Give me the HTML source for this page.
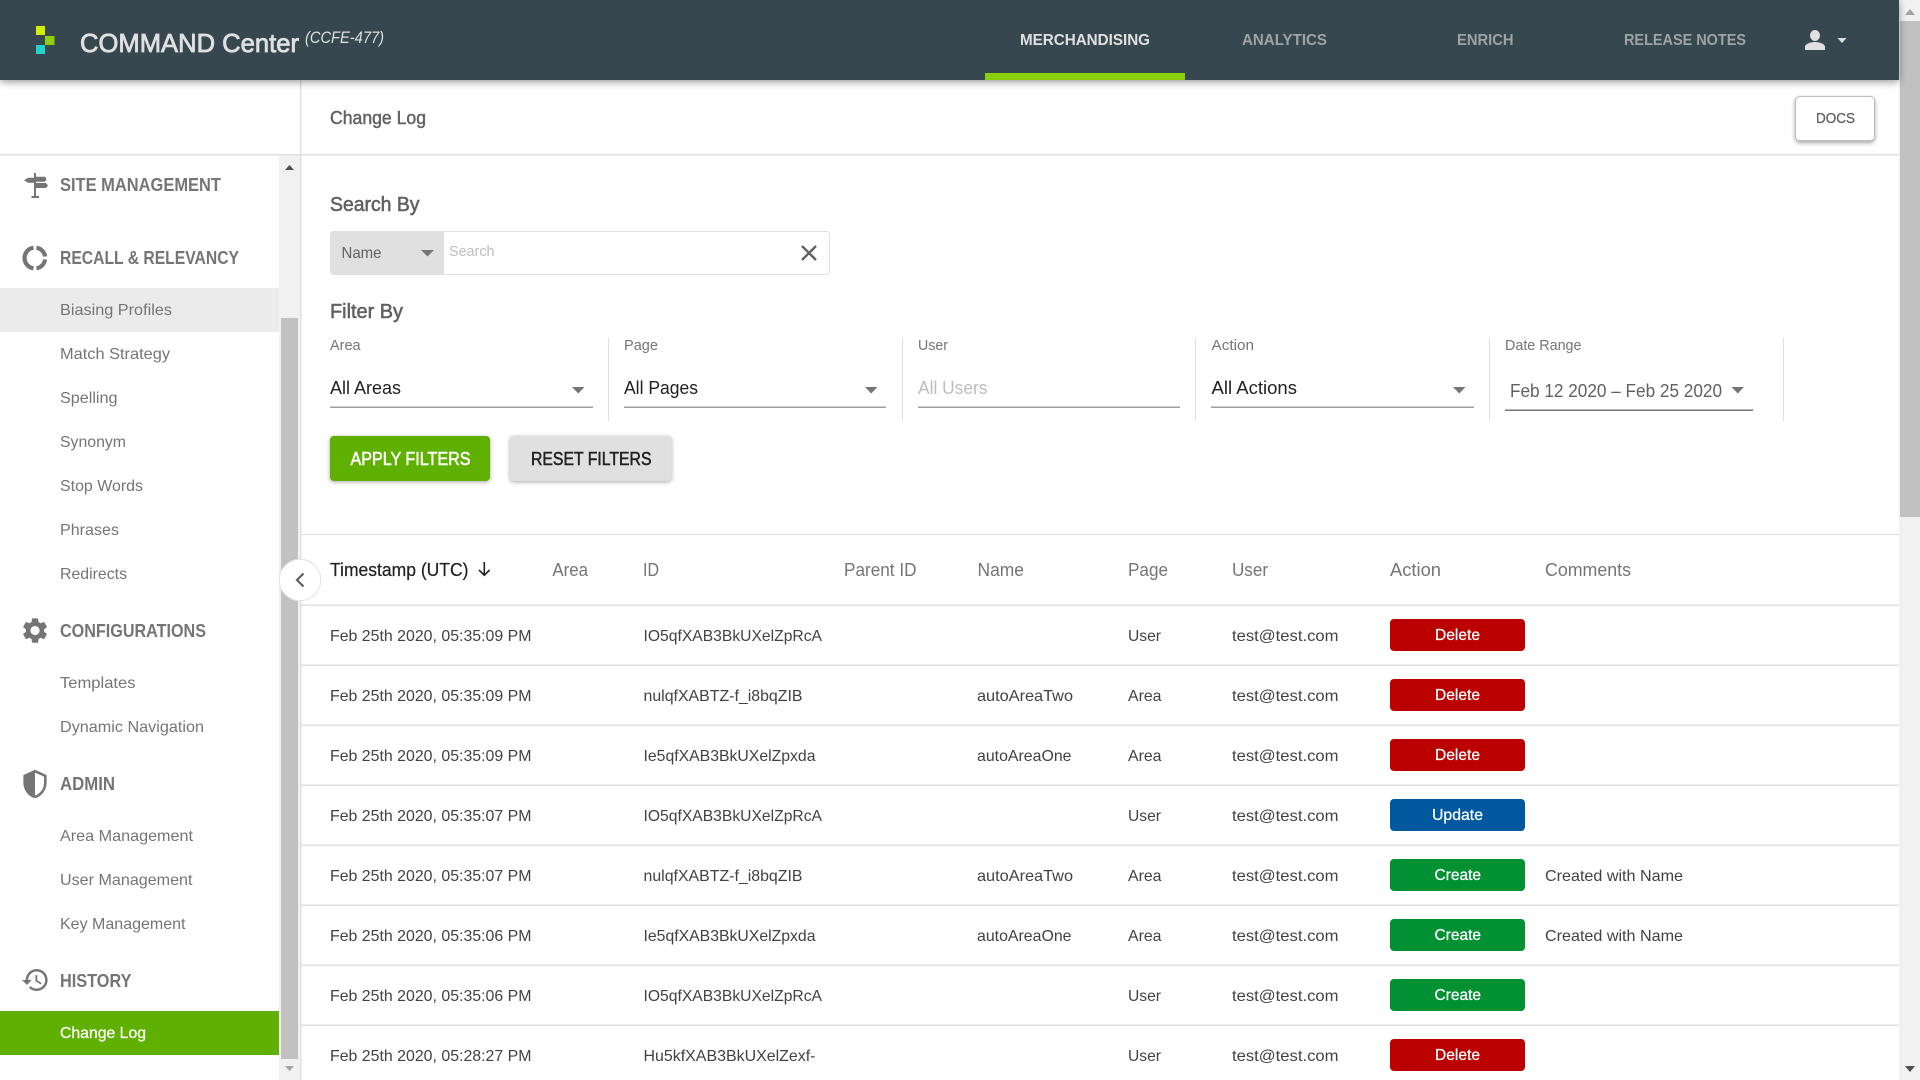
<!DOCTYPE html>
<html lang="en">
<head>
<meta charset="utf-8">
<title>COMMAND Center - Change Log</title>
<style>
html,body{margin:0;padding:0;background:#fff;width:1920px;height:1080px;overflow:hidden}
svg{display:block;font-family:"Liberation Sans",Arimo,sans-serif}
text{fill:currentColor}
.m{stroke:currentColor;stroke-width:.45px}
.b{font-weight:700}
.h{font-size:18px;color:#757575}
.i{font-size:16px;color:#757575}
.l{font-size:15px;color:#757575}
.v{font-size:18px;color:#212121}
.th{font-size:18px;color:#757575}
.t{font-size:16px;color:#424242}
.w{font-size:16px;color:#fff}
.n{font-size:16px}
</style>
</head>
<body>
<svg xmlns="http://www.w3.org/2000/svg" width="1920" height="1080" viewBox="0 0 1920 1080">
<rect width="1920" height="1080" fill="#fff"/>

<!-- Sidebar -->
<rect x="0" y="288" width="279" height="44" fill="#ebebeb"/>
<rect x="0" y="1011" width="279" height="44" fill="#5fb000"/>
<rect x="279" y="155" width="21" height="925" fill="#f1f1f1"/>
<rect x="281" y="318" width="17" height="741" fill="#c1c1c1"/>
<path d="M285 170h9l-4.500-5z" fill="#505050"/>
<path d="M285 1066h9l-4.500 5z" fill="#a3a3a3"/>
<rect x="300" y="80" width="1.500" height="1000" fill="#e0e0e0"/>
<rect x="0" y="154" width="1900" height="1.500" fill="#e0e0e0"/>

<g fill="#757575">
<path d="M34 173h2v3.700h9l1.600 2.500-1.600 2.500h-9v1.300h10l2 2.500-2 2.500h-10v8h3v2h-7.500v-2h2.500v-13.300h-6l-4-2.500 4-2.500h6z"/>
<path d="M33.500 247.700A10.400 10.400 0 0 0 33.500 268.300M36.500 247.700A10.400 10.400 0 0 1 45.100 256.500M45.100 259.500A10.400 10.400 0 0 1 36.500 268.300" fill="none" stroke="#757575" stroke-width="4.200"/>
<path transform="translate(19.800 615.300) scale(1.270)" d="M19.140 12.940c.04-.3.06-.61.06-.94 0-.32-.02-.64-.07-.94l2.030-1.580c.18-.14.23-.41.12-.61l-1.920-3.320c-.12-.22-.37-.29-.59-.22l-2.390.96c-.5-.38-1.030-.7-1.620-.94l-.36-2.540c-.04-.24-.24-.41-.48-.41h-3.840c-.24 0-.43.17-.47.41l-.36 2.540c-.59.24-1.130.57-1.620.94l-2.390-.96c-.22-.08-.47 0-.59.22L2.740 8.870c-.12.21-.08.47.12.61l2.030 1.580c-.05.3-.09.63-.09.94s.02.64.07.94l-2.030 1.580c-.18.14-.23.41-.12.61l1.920 3.320c.12.22.37.29.59.22l2.390-.96c.5.38 1.030.7 1.620.94l.36 2.540c.05.24.24.41.48.41h3.840c.24 0 .44-.17.47-.41l.36-2.540c.59-.24 1.130-.56 1.620-.94l2.390.96c.22.08.47 0 .59-.22l1.920-3.320c.12-.22.07-.47-.12-.61l-2.010-1.580zM12 15.600c-1.980 0-3.600-1.620-3.600-3.600s1.620-3.600 3.600-3.600 3.600 1.620 3.600 3.600-1.620 3.600-3.600 3.600z"/>
<path fill-rule="evenodd" transform="translate(19.500 768.500) scale(1.290)" d="M12 1L3 5v6c0 5.550 3.840 10.740 9 12 5.160-1.260 9-6.450 9-12V5l-9-4z M12 3.200V20.900c3.900-1.150 7-5.200 7-9.900V6.300z"/>
<path transform="translate(20.800 965.400) scale(1.220)" d="M13 3a9 9 0 0 0-9 9H1l3.890 3.890.07.14L9 12H6c0-3.870 3.130-7 7-7s7 3.130 7 7-3.130 7-7 7c-1.930 0-3.680-.79-4.940-2.060l-1.420 1.420A8.954 8.954 0 0 0 13 21a9 9 0 0 0 0-18zm-1 5v5l4.280 2.540.72-1.210-3.500-2.080V8H12z"/>
</g>

<text x="60" y="191" class="h b" textLength="161" lengthAdjust="spacingAndGlyphs">SITE MANAGEMENT</text>
<text x="60" y="264" class="h b" textLength="179" lengthAdjust="spacingAndGlyphs">RECALL &amp; RELEVANCY</text>
<text x="60" y="315" class="i" textLength="112" lengthAdjust="spacingAndGlyphs">Biasing Profiles</text>
<text x="60" y="359" class="i" textLength="110" lengthAdjust="spacingAndGlyphs">Match Strategy</text>
<text x="60" y="403" class="i" textLength="57.500" lengthAdjust="spacingAndGlyphs">Spelling</text>
<text x="60" y="447" class="i" textLength="66" lengthAdjust="spacingAndGlyphs">Synonym</text>
<text x="60" y="491" class="i" textLength="83" lengthAdjust="spacingAndGlyphs">Stop Words</text>
<text x="60" y="535" class="i" textLength="59" lengthAdjust="spacingAndGlyphs">Phrases</text>
<text x="60" y="579" class="i" textLength="67" lengthAdjust="spacingAndGlyphs">Redirects</text>
<text x="60" y="637" class="h b" textLength="146" lengthAdjust="spacingAndGlyphs">CONFIGURATIONS</text>
<text x="60" y="688" class="i" textLength="75.500" lengthAdjust="spacingAndGlyphs">Templates</text>
<text x="60" y="732" class="i" textLength="144" lengthAdjust="spacingAndGlyphs">Dynamic Navigation</text>
<text x="60" y="790" class="h b" textLength="55" lengthAdjust="spacingAndGlyphs">ADMIN</text>
<text x="60" y="841" class="i" textLength="133" lengthAdjust="spacingAndGlyphs">Area Management</text>
<text x="60" y="885" class="i" textLength="132.500" lengthAdjust="spacingAndGlyphs">User Management</text>
<text x="60" y="929" class="i" textLength="125.500" lengthAdjust="spacingAndGlyphs">Key Management</text>
<text x="60" y="987" class="h b" textLength="71.500" lengthAdjust="spacingAndGlyphs">HISTORY</text>
<text x="60" y="1038" class="w m" style="stroke-width:.25px" textLength="86" lengthAdjust="spacingAndGlyphs">Change Log</text>

<!-- Page title -->
<text x="330" y="124" class="m" style="font-size:18px;color:#616161" textLength="96" lengthAdjust="spacingAndGlyphs">Change Log</text>
<rect x="1795.500" y="96.500" width="79" height="44" rx="4" fill="#fff" stroke="#bdbdbd" style="filter:drop-shadow(0 2px 2px rgba(0,0,0,.35))"/>
<text x="1816" y="123" class="m" style="font-size:15px;color:#616161;stroke-width:.3px" textLength="39" lengthAdjust="spacingAndGlyphs">DOCS</text>

<!-- Search -->
<text x="330" y="211" class="m" style="font-size:20px;color:#616161;stroke-width:.55px" textLength="89.500" lengthAdjust="spacingAndGlyphs">Search By</text>
<rect x="330.500" y="231.500" width="499" height="43" rx="3" fill="#fff" stroke="#e0e0e0"/>
<path d="M334 231h110v44h-110a4 4 0 0 1-4-4v-36a4 4 0 0 1 4-4z" fill="#e0e0e0"/>
<text x="341.500" y="258" class="n" style="color:#616161" textLength="40" lengthAdjust="spacingAndGlyphs">Name</text>
<path d="M421 250h13l-6.500 6.500z" fill="#757575"/>
<text x="449" y="256" style="font-size:15px;color:#bdbdbd" textLength="45.500" lengthAdjust="spacingAndGlyphs">Search</text>
<path d="M802 246l14 14M816 246l-14 14" stroke="#616161" stroke-width="2.400" fill="none"/>

<!-- Filters -->
<text x="330" y="318" class="m" style="font-size:20px;color:#616161;stroke-width:.55px" textLength="73" lengthAdjust="spacingAndGlyphs">Filter By</text>
<g fill="#e0e0e0">
<rect x="608" y="338" width="1" height="83"/>
<rect x="902" y="338" width="1" height="83"/>
<rect x="1195" y="338" width="1" height="83"/>
<rect x="1489" y="338" width="1" height="83"/>
<rect x="1783" y="338" width="1" height="83"/>
</g>
<text x="330" y="350" class="l" textLength="30.500" lengthAdjust="spacingAndGlyphs">Area</text>
<text x="624" y="350" class="l" textLength="34" lengthAdjust="spacingAndGlyphs">Page</text>
<text x="918" y="350" class="l" textLength="30" lengthAdjust="spacingAndGlyphs">User</text>
<text x="1211.500" y="350" class="l" textLength="42.500" lengthAdjust="spacingAndGlyphs">Action</text>
<text x="1505" y="350" class="l" textLength="76.500" lengthAdjust="spacingAndGlyphs">Date Range</text>
<text x="330" y="394" class="v" textLength="71" lengthAdjust="spacingAndGlyphs">All Areas</text>
<text x="624" y="394" class="v" textLength="74" lengthAdjust="spacingAndGlyphs">All Pages</text>
<text x="918" y="394" class="v" style="color:#bdbdbd" textLength="69.500" lengthAdjust="spacingAndGlyphs">All Users</text>
<text x="1211.500" y="394" class="v" textLength="85.500" lengthAdjust="spacingAndGlyphs">All Actions</text>
<text x="1510" y="397" class="v" style="color:#616161" textLength="212" lengthAdjust="spacingAndGlyphs">Feb 12 2020 – Feb 25 2020</text>
<g fill="#9e9e9e">
<rect x="330" y="406.500" width="263" height="1.500"/>
<rect x="624" y="406.500" width="262" height="1.500"/>
<rect x="918" y="406.500" width="262" height="1.500"/>
<rect x="1211" y="406.500" width="263" height="1.500"/>
</g>
<rect x="1505" y="409.500" width="248" height="1.500" fill="#757575"/>
<g fill="#757575">
<path d="M572 387h12.500l-6.250 6.500z"/>
<path d="M865 387h12.500l-6.250 6.500z"/>
<path d="M1453 387h12.500l-6.250 6.500z"/>
<path d="M1731.500 387h12.500l-6.250 6.500z"/>
</g>

<!-- Buttons -->
<rect x="330" y="436" width="160" height="45" rx="4" fill="#5fb000" style="filter:drop-shadow(0 1.500px 2px rgba(0,0,0,.35))"/>
<text x="350.500" y="465" class="m" style="font-size:18px;color:#fff;stroke-width:.55px" textLength="120" lengthAdjust="spacingAndGlyphs">APPLY FILTERS</text>
<rect x="510" y="436" width="161.500" height="45" rx="4" fill="#e0e0e0" style="filter:drop-shadow(0 1.500px 2px rgba(0,0,0,.35))"/>
<text x="531" y="465" class="m" style="font-size:18px;color:#212121;stroke-width:.5px" textLength="120.500" lengthAdjust="spacingAndGlyphs">RESET FILTERS</text>

<!-- Table header -->
<g fill="#e0e0e0">
<rect x="301" y="534" width="1599" height="1"/>
<rect x="301" y="604.500" width="1599" height="1.500"/>
<rect x="301" y="664.500" width="1599" height="1.500"/>
<rect x="301" y="724.500" width="1599" height="1.500"/>
<rect x="301" y="784.500" width="1599" height="1.500"/>
<rect x="301" y="844.500" width="1599" height="1.500"/>
<rect x="301" y="904.500" width="1599" height="1.500"/>
<rect x="301" y="964.500" width="1599" height="1.500"/>
<rect x="301" y="1024.500" width="1599" height="1.500"/>
</g>
<text x="330" y="576" class="th m" style="color:#212121;stroke-width:.2px" textLength="138.500" lengthAdjust="spacingAndGlyphs">Timestamp (UTC)</text>
<path d="M484.300 562v13M479 570l5.300 5.300 5.300-5.300" fill="none" stroke="#212121" stroke-width="1.600"/>
<text x="552.400" y="576" class="th" textLength="35.600" lengthAdjust="spacingAndGlyphs">Area</text>
<text x="643" y="576" class="th" textLength="16" lengthAdjust="spacingAndGlyphs">ID</text>
<text x="844" y="576" class="th" textLength="72.500" lengthAdjust="spacingAndGlyphs">Parent ID</text>
<text x="977.500" y="576" class="th" textLength="46.500" lengthAdjust="spacingAndGlyphs">Name</text>
<text x="1128" y="576" class="th" textLength="40" lengthAdjust="spacingAndGlyphs">Page</text>
<text x="1232" y="576" class="th" textLength="36" lengthAdjust="spacingAndGlyphs">User</text>
<text x="1390" y="576" class="th" textLength="51" lengthAdjust="spacingAndGlyphs">Action</text>
<text x="1545" y="576" class="th" textLength="86" lengthAdjust="spacingAndGlyphs">Comments</text>

<!-- Collapse button -->
<circle cx="300" cy="580" r="20.800" fill="#fff" stroke="#e0e0e0" stroke-width="1"/>
<path d="M303.500 573.500l-6.500 6.500 6.500 6.500" fill="none" stroke="#616161" stroke-width="2.200"/>

<!-- Row 1 -->
<text x="330" y="641" class="t" textLength="201.500" lengthAdjust="spacingAndGlyphs">Feb 25th 2020, 05:35:09 PM</text>
<text x="643.500" y="641" class="t" textLength="178.500" lengthAdjust="spacingAndGlyphs">IO5qfXAB3BkUXelZpRcA</text>
<text x="1128" y="641" class="t" textLength="33" lengthAdjust="spacingAndGlyphs">User</text>
<text x="1232" y="641" class="t" textLength="106.500" lengthAdjust="spacingAndGlyphs">test@test.com</text>
<rect x="1390" y="619" width="135" height="32" rx="4" fill="#bb0000"/>
<text x="1435" y="640" class="w m" style="stroke-width:.25px" textLength="45" lengthAdjust="spacingAndGlyphs">Delete</text>

<!-- Row 2 -->
<text x="330" y="701" class="t" textLength="201.500" lengthAdjust="spacingAndGlyphs">Feb 25th 2020, 05:35:09 PM</text>
<text x="643.500" y="701" class="t" textLength="159" lengthAdjust="spacingAndGlyphs">nulqfXABTZ-f_i8bqZIB</text>
<text x="977" y="701" class="t" textLength="96" lengthAdjust="spacingAndGlyphs">autoAreaTwo</text>
<text x="1128" y="701" class="t" textLength="33.500" lengthAdjust="spacingAndGlyphs">Area</text>
<text x="1232" y="701" class="t" textLength="106.500" lengthAdjust="spacingAndGlyphs">test@test.com</text>
<rect x="1390" y="679" width="135" height="32" rx="4" fill="#bb0000"/>
<text x="1435" y="700" class="w m" style="stroke-width:.25px" textLength="45" lengthAdjust="spacingAndGlyphs">Delete</text>

<!-- Row 3 -->
<text x="330" y="761" class="t" textLength="201.500" lengthAdjust="spacingAndGlyphs">Feb 25th 2020, 05:35:09 PM</text>
<text x="643.500" y="761" class="t" textLength="172" lengthAdjust="spacingAndGlyphs">Ie5qfXAB3BkUXelZpxda</text>
<text x="977" y="761" class="t" textLength="94.500" lengthAdjust="spacingAndGlyphs">autoAreaOne</text>
<text x="1128" y="761" class="t" textLength="33.500" lengthAdjust="spacingAndGlyphs">Area</text>
<text x="1232" y="761" class="t" textLength="106.500" lengthAdjust="spacingAndGlyphs">test@test.com</text>
<rect x="1390" y="739" width="135" height="32" rx="4" fill="#bb0000"/>
<text x="1435" y="760" class="w m" style="stroke-width:.25px" textLength="45" lengthAdjust="spacingAndGlyphs">Delete</text>

<!-- Row 4 -->
<text x="330" y="821" class="t" textLength="201.500" lengthAdjust="spacingAndGlyphs">Feb 25th 2020, 05:35:07 PM</text>
<text x="643.500" y="821" class="t" textLength="178.500" lengthAdjust="spacingAndGlyphs">IO5qfXAB3BkUXelZpRcA</text>
<text x="1128" y="821" class="t" textLength="33" lengthAdjust="spacingAndGlyphs">User</text>
<text x="1232" y="821" class="t" textLength="106.500" lengthAdjust="spacingAndGlyphs">test@test.com</text>
<rect x="1390" y="799" width="135" height="32" rx="4" fill="#00589f"/>
<text x="1432" y="820" class="w m" style="stroke-width:.25px" textLength="51" lengthAdjust="spacingAndGlyphs">Update</text>

<!-- Row 5 -->
<text x="330" y="881" class="t" textLength="201.500" lengthAdjust="spacingAndGlyphs">Feb 25th 2020, 05:35:07 PM</text>
<text x="643.500" y="881" class="t" textLength="159" lengthAdjust="spacingAndGlyphs">nulqfXABTZ-f_i8bqZIB</text>
<text x="977" y="881" class="t" textLength="96" lengthAdjust="spacingAndGlyphs">autoAreaTwo</text>
<text x="1128" y="881" class="t" textLength="33.500" lengthAdjust="spacingAndGlyphs">Area</text>
<text x="1232" y="881" class="t" textLength="106.500" lengthAdjust="spacingAndGlyphs">test@test.com</text>
<rect x="1390" y="859" width="135" height="32" rx="4" fill="#029132"/>
<text x="1434.500" y="880" class="w m" style="stroke-width:.25px" textLength="46.500" lengthAdjust="spacingAndGlyphs">Create</text>
<text x="1545" y="881" class="t" textLength="138" lengthAdjust="spacingAndGlyphs">Created with Name</text>

<!-- Row 6 -->
<text x="330" y="941" class="t" textLength="201.500" lengthAdjust="spacingAndGlyphs">Feb 25th 2020, 05:35:06 PM</text>
<text x="643.500" y="941" class="t" textLength="172" lengthAdjust="spacingAndGlyphs">Ie5qfXAB3BkUXelZpxda</text>
<text x="977" y="941" class="t" textLength="94.500" lengthAdjust="spacingAndGlyphs">autoAreaOne</text>
<text x="1128" y="941" class="t" textLength="33.500" lengthAdjust="spacingAndGlyphs">Area</text>
<text x="1232" y="941" class="t" textLength="106.500" lengthAdjust="spacingAndGlyphs">test@test.com</text>
<rect x="1390" y="919" width="135" height="32" rx="4" fill="#029132"/>
<text x="1434.500" y="940" class="w m" style="stroke-width:.25px" textLength="46.500" lengthAdjust="spacingAndGlyphs">Create</text>
<text x="1545" y="941" class="t" textLength="138" lengthAdjust="spacingAndGlyphs">Created with Name</text>

<!-- Row 7 -->
<text x="330" y="1001" class="t" textLength="201.500" lengthAdjust="spacingAndGlyphs">Feb 25th 2020, 05:35:06 PM</text>
<text x="643.500" y="1001" class="t" textLength="178.500" lengthAdjust="spacingAndGlyphs">IO5qfXAB3BkUXelZpRcA</text>
<text x="1128" y="1001" class="t" textLength="33" lengthAdjust="spacingAndGlyphs">User</text>
<text x="1232" y="1001" class="t" textLength="106.500" lengthAdjust="spacingAndGlyphs">test@test.com</text>
<rect x="1390" y="979" width="135" height="32" rx="4" fill="#029132"/>
<text x="1434.500" y="1000" class="w m" style="stroke-width:.25px" textLength="46.500" lengthAdjust="spacingAndGlyphs">Create</text>

<!-- Row 8 -->
<text x="330" y="1061" class="t" textLength="201.500" lengthAdjust="spacingAndGlyphs">Feb 25th 2020, 05:28:27 PM</text>
<text x="643.500" y="1061" class="t" textLength="172" lengthAdjust="spacingAndGlyphs">Hu5kfXAB3BkUXelZexf-</text>
<text x="1128" y="1061" class="t" textLength="33" lengthAdjust="spacingAndGlyphs">User</text>
<text x="1232" y="1061" class="t" textLength="106.500" lengthAdjust="spacingAndGlyphs">test@test.com</text>
<rect x="1390" y="1039" width="135" height="32" rx="4" fill="#bb0000"/>
<text x="1435" y="1060" class="w m" style="stroke-width:.25px" textLength="45" lengthAdjust="spacingAndGlyphs">Delete</text>

<!-- Page scrollbar -->
<rect x="1899" y="0" width="21" height="1080" fill="#f1f1f1"/>
<rect x="1900" y="21" width="20" height="496" fill="#c1c1c1"/>
<path d="M1905 15h10l-5-6z" fill="#a3a3a3"/>
<path d="M1905 1066h10l-5 6z" fill="#505050"/>

<!-- Header -->
<rect x="0" y="0" width="1899" height="80" fill="#37474f" style="filter:drop-shadow(0 2px 4px rgba(0,0,0,.4))"/>
<rect x="36" y="26" width="9" height="9" fill="#d4ee00"/>
<rect x="45" y="36" width="9.500" height="9" fill="#8bcf0a"/>
<rect x="36" y="45" width="9" height="9" fill="#22d3c8"/>
<text x="80" y="52" class="m" style="font-size:26px;color:#e0e0e0;stroke-width:.8px" textLength="219" lengthAdjust="spacingAndGlyphs">COMMAND Center</text>
<text x="305" y="43" style="font-size:17px;font-style:italic;color:#e0e0e0" textLength="79" lengthAdjust="spacingAndGlyphs">(CCFE-477)</text>
<rect x="985" y="73" width="200" height="7" fill="#8bcf0a"/>
<text x="1020" y="45" class="n b" style="color:#e0e0e0" textLength="130" lengthAdjust="spacingAndGlyphs">MERCHANDISING</text>
<text x="1242" y="45" class="n b" style="color:#9ea3a5" textLength="85" lengthAdjust="spacingAndGlyphs">ANALYTICS</text>
<text x="1457" y="45" class="n b" style="color:#9ea3a5" textLength="56.500" lengthAdjust="spacingAndGlyphs">ENRICH</text>
<text x="1624" y="45" class="n b" style="color:#9ea3a5" textLength="122" lengthAdjust="spacingAndGlyphs">RELEASE NOTES</text>
<ellipse cx="1815" cy="35.500" rx="5" ry="5.500" fill="#e0e0e0"/>
<path d="M1805 50v-3c0-3.500 6.500-5 10-5s10 1.500 10 5v3z" fill="#e0e0e0"/>
<path d="M1837.500 38h9l-4.500 5z" fill="#e0e0e0"/>
</svg>
</body>
</html>
